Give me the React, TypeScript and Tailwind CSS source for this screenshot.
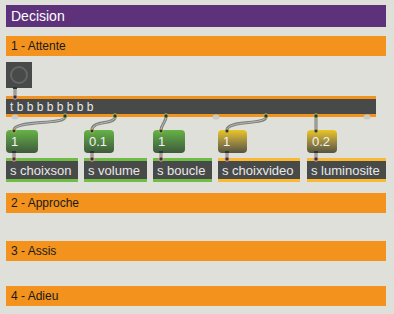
import React from "react";

const font = { fontFamily: '"Liberation Sans", Arial, sans-serif' };

function Bar({ label }: { label: string }) {
  return (
    <div className="h-[20px] w-[380px] bg-[#f3921c] flex items-center pl-[5px] text-[12px] text-[#1a1a1a] leading-none">
      {label}
    </div>
  );
}

type Msg = { left: number; w: number; text: string; yellow?: boolean };
type Snd = { left: number; w: number; text: string; yellow?: boolean };

const msgs: Msg[] = [
  { left: 0, w: 32, text: "1" },
  { left: 78, w: 30, text: "0.1" },
  { left: 147, w: 32, text: "1" },
  { left: 212, w: 29, text: "1", yellow: true },
  { left: 301, w: 30, text: "0.2", yellow: true },
];

const sends: Snd[] = [
  { left: 0, w: 72, text: "s choixson" },
  { left: 78, w: 63, text: "s volume" },
  { left: 147, w: 59, text: "s boucle" },
  { left: 212, w: 82, text: "s choixvideo", yellow: true },
  { left: 301, w: 79, text: "s luminosite", yellow: true },
];

function Cord({ d }: { d: string }) {
  return (
    <g fill="none" strokeLinecap="round">
      <path d={d} stroke="#7c7e7c" strokeWidth={3} />
      <path d={d} stroke="#b9bbb8" strokeWidth={1} />
    </g>
  );
}

export default function App() {
  const outX = [9, 59, 109, 160, 210, 260, 310, 361];
  const connected = [59, 109, 160, 260, 310];
  return (
    <div
      className="w-[394px] h-[314px] bg-[#dfe0da] pt-[5px] px-[6px] flex flex-col overflow-hidden"
      style={font}
    >
      <div className="h-[22px] w-[380px] bg-[#5d327a] flex items-center pl-[5px] text-[14px] text-white leading-none">
        Decision
      </div>
      <div className="mt-[9px]">
        <Bar label="1 - Attente" />
      </div>
      <div className="relative h-[137px] w-[380px]">
        {/* bang */}
        <div className="absolute left-0 top-[6px] w-[26px] h-[26px] bg-[#474a49] flex items-center justify-center">
          <div className="w-[18px] h-[18px] rounded-full border-[2px] border-[#626564]" />
        </div>
        {/* trigger */}
        <div className="absolute left-0 top-[40px] w-[370px] h-[21px] bg-[#474a49] border-y-[3px] border-[#f3921c] flex items-center pl-[4px] text-[12px] text-[#e8e8e8] leading-none">
          t b b b b b b b b
        </div>
        {msgs.map((m, i) => (
          <div
            key={i}
            className={
              "absolute top-[74px] h-[23px] rounded-[4px] flex items-center pl-[5px] text-[13px] text-[#f2f2f2] leading-none " +
              (m.yellow
                ? "bg-gradient-to-b from-[#ecc61c] to-[#57543f]"
                : "bg-gradient-to-b from-[#66b444] to-[#3e5a3b]")
            }
            style={{ left: m.left, width: m.w }}
          >
            {m.text}
          </div>
        ))}
        {sends.map((s, i) => (
          <div
            key={i}
            className={
              "absolute top-[102px] h-[24px] bg-[#474a49] border-y-[3px] flex items-center pl-[4px] text-[13px] text-[#e8e8e8] leading-none " +
              (s.yellow ? "border-[#fbb931]" : "border-[#6fbe44]")
            }
            style={{ left: s.left, width: s.w }}
          >
            {s.text}
          </div>
        ))}
        <svg className="absolute left-0 top-0 pointer-events-none" width={380} height={137}>
          <Cord d="M9 33 L9 40" />
          <Cord d="M59 61 C59 69, 8 64, 8 74" />
          <Cord d="M109 61 C109 69, 86 64, 86 74" />
          <Cord d="M160 61 C160 66, 155 69, 155 74" />
          <Cord d="M260 61 C260 69, 221 64, 221 74" />
          <Cord d="M310 61 L310 74" />
          {[8, 86, 155, 221, 310].map((x) => (
            <Cord key={x} d={`M${x} 97 L${x} 102`} />
          ))}
          {/* unconnected outlets */}
          {outX
            .filter((x) => !connected.includes(x))
            .map((x) => (
              <ellipse key={x} cx={x} cy={61} rx={3.5} ry={2.5} fill="#c9cac5" />
            ))}
          {/* connected outlets */}
          {connected.map((x) => (
            <circle key={x} cx={x} cy={60} r={2.2} fill="#303332" stroke="#b9c256" strokeWidth={1} />
          ))}
          {/* trigger inlet */}
          <circle cx={9} cy={41} r={2.2} fill="#303332" stroke="#e7a29a" strokeWidth={1} />
          {/* bang outlet */}
          <rect x={7} y={31} width={4} height={2} fill="#303332" />
          {/* message inlets + outlets, send inlets */}
          {[8, 86, 155, 221, 310].map((x) => (
            <g key={x}>
              <circle cx={x} cy={75} r={2} fill="#303332" stroke="#c9c256" strokeWidth={0.8} />
              <rect x={x - 2} y={95} width={4} height={2} fill="#303332" />
              <circle cx={x} cy={103} r={2.2} fill="#303332" stroke="#e7a29a" strokeWidth={1} />
            </g>
          ))}
        </svg>
      </div>
      <Bar label="2 - Approche" />
      <div className="mt-[28px]">
        <Bar label="3 - Assis" />
      </div>
      <div className="mt-[25px]">
        <Bar label="4 - Adieu" />
      </div>
    </div>
  );
}
